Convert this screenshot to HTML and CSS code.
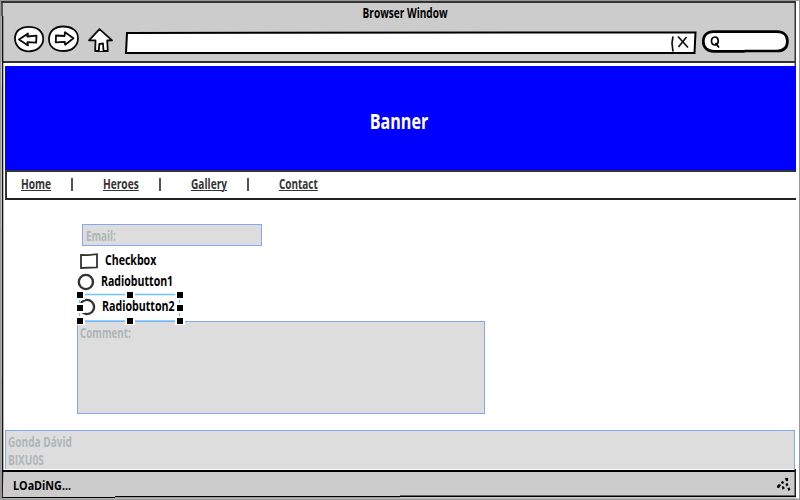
FILE: index.html
```
<!DOCTYPE html>
<html lang="en">
<head>
<meta charset="utf-8">
<title>Browser Window</title>
<link rel="stylesheet" href="styles.css">
</head>
<body>
<div class="window">
  <header class="chrome">
    <div class="title"><span class="t t-title">Browser Window</span></div>
    <div class="toolbar">
      <svg class="nav-icons" width="102" height="30" viewBox="13 24 102 30">
        <g fill="#fff" stroke="#0a0a0a" stroke-width="1.8" stroke-linejoin="round">
          <path d="M15 38.5C15 31.5 20 26.8 29 26.8C38 26.8 43.2 32 43.2 39C43.2 46 37 51.3 29 51.3C21 51.3 15 46 15 38.5Z"/>
          <path d="M19 39.5L28 33.4L27.3 36.5L36.5 35.6L36.1 42.7L27.4 42.2L28 45.4Z"/>
          <path d="M49 39C49 31 55 26.5 63 26.5C72 26.5 78 31 78 38C78 46 72 51 64 51C55 51 49 47 49 39Z"/>
          <path d="M56 35.5L64.6 36L65 32.2L73.5 38.3L65.2 44.7L64.8 41.9L55.8 42.3Z"/>
          <path d="M89 40.3L99.5 29.2L112 40.4L107.2 40.5L107.8 51L95.2 51L95.5 40.4Z"/>
          <path d="M98.8 51L99.3 43.8L103 43.5L103.5 51"/>
        </g>
      </svg>
      <svg class="address" width="574" height="26" viewBox="124 30 574 26">
        <path d="M127 33L695.5 32.4L694.5 53L126 53Z" fill="#fff" stroke="#000" stroke-width="2"/>
        <path d="M673 36.5L672 43L673 51.5M678 36.5L688 47.5M686.5 37L678.5 47" fill="none" stroke="#111" stroke-width="1.7"/>
      </svg>
      <svg class="search" width="88" height="26" viewBox="701 29 88 26">
        <path d="M714 31.7L777 31.7C784 31.7 787.4 36 787.4 41C787.4 47 784 51 777 51L745 51L744 51.4L714 51.4C707 51.4 703.3 47 703.3 41.5C703.3 35.5 707 31.7 714 31.7Z" fill="#fff" stroke="#000" stroke-width="2.7"/>
        <path d="M715 37C712.5 37 711.3 39 711.5 41.5C711.7 44 713 45 715 45C717.3 44.8 718.3 43 718.2 40.5C718 38 717 37 715 37ZM715.5 43L719 47.5" fill="none" stroke="#000" stroke-width="1.7"/>
      </svg>
    </div>
  </header>
  <main class="page">
    <div class="banner"><span class="t t-banner">Banner</span></div>
    <nav class="menu">
      <a class="t t-home">Home</a><i class="sep"></i>
      <a class="t t-heroes">Heroes</a><i class="sep"></i>
      <a class="t t-gallery">Gallery</a><i class="sep"></i>
      <a class="t t-contact">Contact</a>
    </nav>
    <form class="form">
      <div class="field email"><span class="t t-email">Email:</span></div>
      <div class="option check">
        <svg width="20" height="17" viewBox="79 252 20 17"><path d="M81 255L88 255.2L97 254.2L97 267.3L81 268Z" fill="#fff" stroke="#333" stroke-width="1.8"/></svg>
        <span class="t t-check">Checkbox</span>
      </div>
      <div class="option radio1">
        <svg width="18" height="18" viewBox="77 273 18 18"><circle cx="85.9" cy="282" r="7.1" fill="#fff" stroke="#333" stroke-width="2.4"/></svg>
        <span class="t t-r1">Radiobutton1</span>
      </div>
      <div class="option radio2">
        <svg width="18" height="18" viewBox="78 298 18 18"><circle cx="87" cy="307" r="7.1" fill="#fff" stroke="#333" stroke-width="2.4"/></svg>
        <span class="t t-r2">Radiobutton2</span>
        <svg class="selection" width="110" height="34" viewBox="75 291 110 34">
          <path d="M80 294.5H180M80 320.8H180M79.5 295V321M179.5 295V321" stroke="#70c4fa" stroke-width="1.3"/>
          <g fill="#000" stroke="#fff" stroke-width="4" paint-order="stroke">
            <path d="M77 292h6v6h-6zM127 292h6v6h-6zM177 292h6v6h-6zM77 305h6v6h-6zM177 305h6v6h-6zM77 318h6v6h-6zM127 318h6v6h-6zM177 318h6v6h-6z"/>
          </g>
        </svg>
      </div>
      <div class="field comment"><span class="t t-comment">Comment:</span></div>
    </form>
    <footer class="author">
      <span class="t t-name">Gonda Dávid</span>
      <span class="t t-id">BIXU0S</span>
    </footer>
  </main>
  <div class="status">
    <span class="t t-load">LOaDiNG...</span>
    <svg width="18" height="16" viewBox="775 477 18 16"><path d="M785 478h3v3h-2zM781 482l2-1 1 2-2 1zM777 486l2-2 2 1-2 3-2-.5zM785.5 484l2-1 .7 2-1.5 1.5zM782 486.5l2 0 .5 2-2 1zM787.5 488.5l2-1 .7 2-1.5 1.5z" fill="#000" stroke="#000" stroke-width=".2"/></svg>
  </div>
  <svg class="frame" width="800" height="500" viewBox="0 0 800 500">
    <path d="M0 0H800V1H0zM0 0H1.5V500H0zM799 0H800V500H799zM0 498.6H800V500H0z" fill="#999"/>
    <path d="M3 1V16H1V1z" fill="#555"/>
    <path d="M1 1H796V3H1zM3 61H796V63H3zM794.5 1H796V66H794.5z" fill="#333"/>
    <path d="M2 16H3.3V470L2.8 498H1.8z" fill="#111"/>
    <path d="M2 470H795V472H2zM2 497H115V498H2zM115 496H400V497.2H115zM400 495.4H796V497H400z" fill="#000"/>
    <path d="M794.5 469H796V496H794.5z" fill="#222"/>
  </svg>
</div>
</body>
</html>
```
FILE: styles.css
```
* { box-sizing: border-box; }
body { margin: 0; width: 800px; height: 500px; overflow: hidden; background: #fff; font: 700 14px/18px "Open Sans", "Noto Sans", sans-serif; color: #000; }
.window { position: relative; width: 800px; height: 500px; display: flex; flex-direction: column; }
.chrome { height: 62px; margin-right: 4px; background: #ccc; }
.title { display: flex; justify-content: center; height: 29px; padding: 4px 0 0 14px; }
.toolbar { display: flex; align-items: flex-start; padding-left: 13px; margin-top: -5px; }
.nav-icons { flex: none; }
.address { flex: none; margin: 6px 0 0 9px; }
.search { flex: none; margin: 5px 0 0 3px; }
.t { display: block; flex: none; white-space: nowrap; transform-origin: 0 50%; }
.title .t, .banner .t { transform-origin: 50% 50%; }
.t-title { transform: scaleX(.72); }
.page { height: 408px; padding: 4px 4px 0 5px; display: flex; flex-direction: column; }
.banner { flex: none; height: 104px; background: #00f; color: #fff; display: flex; justify-content: center; align-items: center; padding: 3px 3px 0 0; font-size: 22px; }
.t-banner { transform: scaleX(.73); }
.menu { flex: none; height: 30px; border: 2px solid #333; border-right: 0; border-bottom-color: #222; padding: 3px 0 0 14px; display: grid; grid-template-columns: 50px 32px 56px 32px 56px 32px 60px; color: #333; }
.menu a { text-decoration: underline; text-underline-offset: 1px; text-decoration-thickness: 1px; }
.menu .t { width: max-content; }
.sep { width: 2px; height: 13px; margin-top: 3px; background: #555; }
.t-home, .t-heroes, .t-gallery { transform: scaleX(.725); }
.t-contact { transform: scaleX(.71); }
.form { margin: 0; height: 230px; padding: 24px 0 0 72px; }
.field { background: #ddd; border: 1px solid #85a8f5; color: #adb7b7; }
.email { width: 180px; height: 22px; margin-left: 5px; padding: 2px 0 0 3px; }
.option { position: relative; display: flex; }
.check { height: 27px; padding: 6px 0 0 2px; }
.check .t, .radio1 .t, .radio2 .t { margin: -1px 0 0 6px; }
.radio1 { height: 25px; }
.radio2 { height: 23px; padding-left: 1px; }
.selection { position: absolute; left: -2px; top: -7px; }
.comment { width: 408px; height: 93px; padding: 2px; }
.author { flex: none; height: 39px; margin-right: 1px; background: #ddd; border: 1px solid #85a8f5; border-bottom: 0; color: #adb7b7; padding: 2px 0 0 2px; line-height: 18px; }
.status { height: 30px; background: #ccc; display: flex; justify-content: space-between; padding: 7px 3px 0 13px; margin-right: 4px; }
.t-check, .t-r1 { transform: scaleX(.755); }
.t-r2 { transform: scaleX(.76); }
.t-email, .t-comment { transform: scaleX(.7); }
.t-name, .t-id { transform: scaleX(.72); }
.t-load { font-size: 12.5px; line-height: 18px; transform: scaleX(.86); }
.frame { position: absolute; left: 0; top: 0; pointer-events: none; }
```
